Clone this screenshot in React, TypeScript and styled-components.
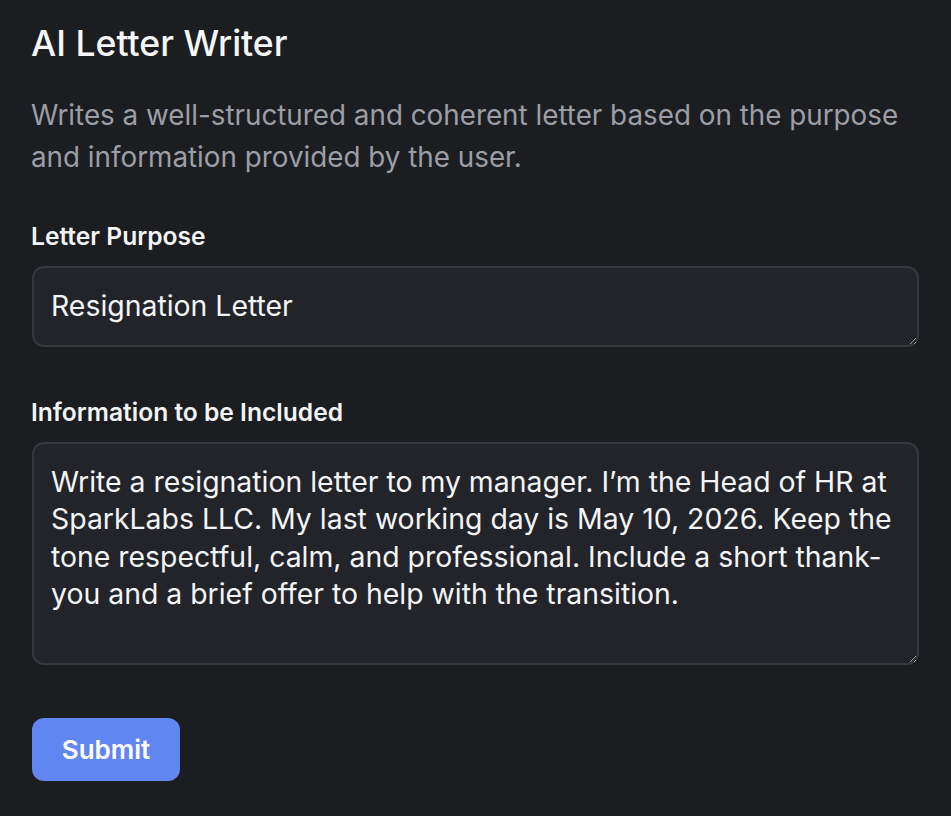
import React from 'react';
import styled, { createGlobalStyle } from 'styled-components';

const GlobalStyle = createGlobalStyle`
  html, body {
    margin: 0;
    padding: 0;
    background: #1c1d21;
  }
  body {
    font-family: Inter, "Noto Sans", sans-serif;
    color: #f3f4f6;
  }
  * {
    box-sizing: border-box;
  }
`;

const Page = styled.main`
  padding: 22px 32px 32px;
  min-height: 816px;
`;

const Title = styled.h1`
  margin: 0 0 0 -1px;
  font-size: 35.6px;
  font-weight: 500;
  line-height: 44px;
  color: #f5f6f8;
`;

const Description = styled.p`
  margin: 28px 0 0 -1px;
  font-size: 27.8px;
  line-height: 42px;
  color: #9c9ea6;
`;

const Field = styled.div<{ $top: number }>`
  display: flex;
  flex-direction: column;
  gap: 15px;
  margin-top: ${(p) => p.$top}px;
`;

const Label = styled.label`
  margin-left: -1px;
  font-size: 24.6px;
  font-weight: 600;
  line-height: 30px;
  color: #f3f4f6;
`;

const TextArea = styled.textarea<{ $height: number }>`
  width: 100%;
  height: ${(p) => p.$height}px;
  padding: 19px 17px;
  border: 2px solid #36373d;
  border-radius: 12px;
  background: #232429;
  color: #f3f4f6;
  font-family: Inter, "Noto Sans", sans-serif;
  font-size: 28.4px;
  line-height: 37.4px;
  resize: vertical;
  outline: none;
  display: block;
`;

const SubmitButton = styled.button`
  margin-top: 53px;
  width: 148px;
  height: 63px;
  border: none;
  border-radius: 12px;
  background: #6286f1;
  color: #ffffff;
  font-family: Inter, "Noto Sans", sans-serif;
  font-size: 26px;
  font-weight: 600;
  cursor: pointer;
`;

export default function App() {
  return (
    <>
      <GlobalStyle />
      <Page>
        <Title>AI Letter Writer</Title>
        <Description>
          Writes a well-structured and coherent letter based on the purpose and information provided by the user.
        </Description>
        <Field $top={43}>
          <Label htmlFor="purpose">Letter Purpose</Label>
          <TextArea id="purpose" $height={81} defaultValue="Resignation Letter" />
        </Field>
        <Field $top={50}>
          <Label htmlFor="info">Information to be Included</Label>
          <TextArea
            id="info"
            $height={223}
            defaultValue="Write a resignation letter to my manager. I’m the Head of HR at SparkLabs LLC. My last working day is May 10, 2026. Keep the tone respectful, calm, and professional. Include a short thank-you and a brief offer to help with the transition."
          />
        </Field>
        <SubmitButton type="button">Submit</SubmitButton>
      </Page>
    </>
  );
}
